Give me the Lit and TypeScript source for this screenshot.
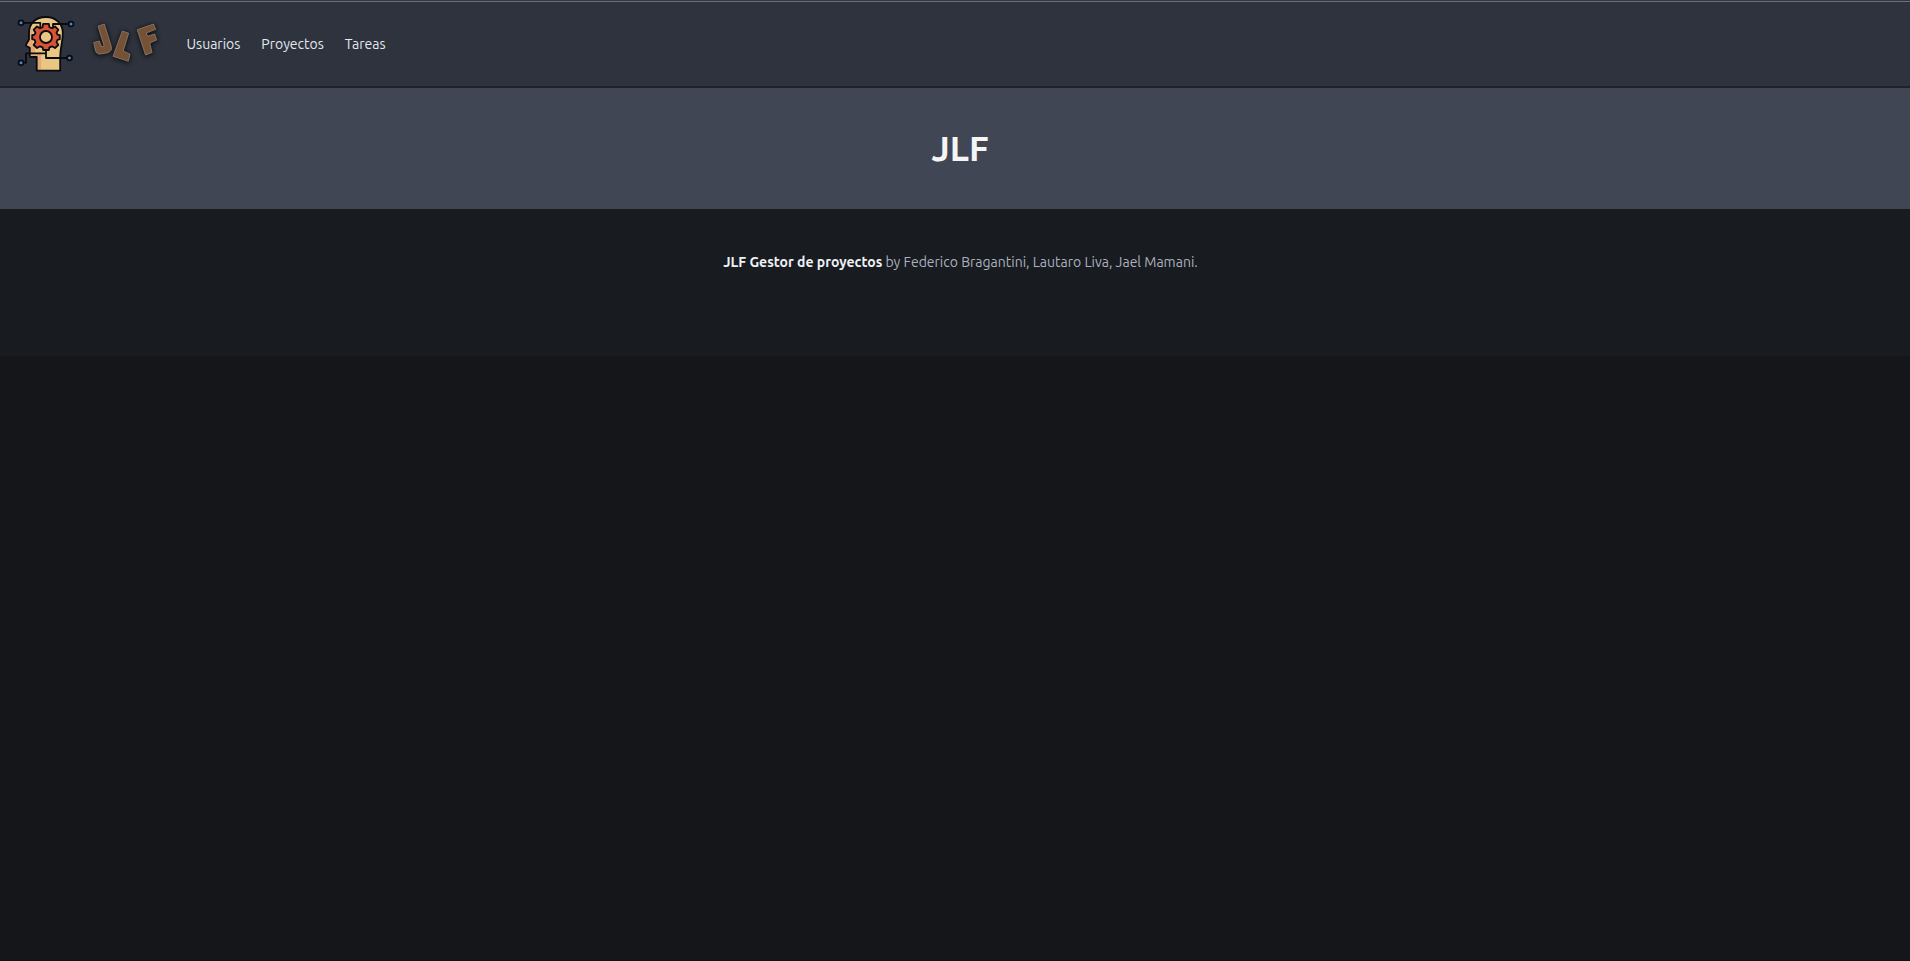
import { LitElement, html, css } from "lit";
import { customElement } from "lit/decorators.js";

@customElement("brain-logo")
class BrainLogo extends LitElement {
  static styles = css`
    :host { display: block; width: 60px; height: 60px; }
    svg { display: block; }
  `;
  render() {
    return html`<svg width="60" height="60" viewBox="16 14 60 60" fill="none" stroke="#080b10" stroke-width="1.8" stroke-linejoin="round" stroke-linecap="round">
      <path stroke="none" fill="#e9c782" d="M36.7 70.7V57H30.8Q29.8 57 29.8 55.5V47.8L26.3 46Q25.6 45.3 26.2 44.4L29 39.5V33C29 23 36 17 46 17C56 17 62.8 24 62.8 33C62.8 43 60.2 47 60.2 57V70.7Z"/>
      <path stroke="none" fill="#e5a878" d="M36.7 70V57H30V47.8L26.5 45.8L29.3 39.7V33L32.5 27V43L35 48V52.5H41V70Z"/>
      <path d="M36.7 70.7V57H30.8Q29.8 57 29.8 55.5V47.8L26.3 46Q25.6 45.3 26.2 44.4L29 39.5V33C29 23 36 17 46 17C56 17 62.8 24 62.8 33C62.8 43 60.2 47 60.2 57V70.7Z"/>
      <path d="M21 22.8H40.3V27M71 24H53V27"/>
      <path d="M21 62.7H26V53.3H46V49M46 53.3V58H69.5"/>
      <path fill="#d95236" d="M43.2 23.8H48.8L49.5 27.2L52 28.3L55 26.4L58.3 29.7L56.5 32.7L57.5 34.6L59.8 35.2V39.2L57.5 39.8L56.5 42L58.3 45L55 48L52 46.3L49.5 47.3L48.8 50H43.2L42.5 47.3L40 46.3L37 48L33.7 45L35.5 42L34.5 39.8L32.2 39.2V35.2L34.5 34.6L35.5 32.7L33.7 29.7L37 26.4L40 28.3L42.5 27.2Z"/>
      <circle cx="46" cy="37" r="6" fill="#e9c782"/>
      <g fill="#5084cf"><circle cx="21" cy="22.8" r="2.4"/><circle cx="71" cy="24" r="2.4"/><circle cx="21" cy="62.7" r="2.4"/><circle cx="69.5" cy="58" r="2.4"/></g>
    </svg>`;
  }
}

@customElement("wood-logo")
class WoodLogo extends LitElement {
  static styles = css`
    :host { display: block; width: 75px; height: 60px; }
    svg { display: block; overflow: visible; filter: drop-shadow(0 1px 2px #15181d) drop-shadow(0 0 1px #15181d); }
  `;
  render() {
    return html`<svg width="75" height="60" viewBox="88 14 75 60" fill="#755236" stroke="#928074" stroke-width="0.8" stroke-linejoin="round">
      <path d="M98 26.2L104.3 24L111.3 46.5Q112.5 51 107.5 52.8L100.5 54Q96.5 54.5 95.3 50L93.7 42.5L99.3 41L101.7 46.8L104.2 46.2Z"/>
      <path d="M122.3 31L128.7 33.2L123.2 51L130 54.2L128.3 61.3L113 56.3Z"/>
      <path d="M137.2 29.7L153.5 24L155.7 29.3L146.3 33L147.7 36.3L154.7 34L156.7 40L149.7 43L152 52.5L145.5 55Z"/>
    </svg>`;
  }
}

@customElement("app-root")
class AppRoot extends LitElement {
  static styles = css`
    :host { display: flex; flex-direction: column; box-sizing: border-box; height: 961px; background: #14161a; border-bottom: 1px solid #180f16; font-family: Ubuntu, "Noto Sans", sans-serif; font-size: 14px; color: #abb1bf; overflow: hidden; }
    nav { box-sizing: border-box; height: 88px; flex: none; display: flex; align-items: center; padding: 1px 0 0 16px; background: #2e333d; border-top: 1px solid #30373e; box-shadow: inset 0 1px #69717a; border-bottom: 2px solid #1f2229; color: #e4e8ee; }
    wood-logo { margin-left: 12px; }
    .links { display: flex; margin-left: 23.5px; gap: 21px; }
    .link { white-space: nowrap; line-height: 20px; }
    .hero { box-sizing: border-box; height: 121px; flex: none; display: grid; place-items: center; padding: 0 0 1px 10px; background: #404654; }
    h1 { margin: 0; font-size: 35px; line-height: 40px; font-weight: 700; color: #f5f5f5; }
    footer { box-sizing: border-box; height: 147px; flex: none; padding: 43px 0 0 11px; background: #181b20; text-align: center; line-height: 20px; }
    strong { color: #eef1f5; font-weight: 700; }
  `;
  render() {
    return html`<nav><brain-logo></brain-logo><wood-logo></wood-logo>
      <div class="links"><span class="link">Usuarios</span><span class="link">Proyectos</span><span class="link">Tareas</span></div></nav>
      <section class="hero"><h1>JLF</h1></section>
      <footer><strong>JLF Gestor de proyectos</strong> by Federico Bragantini, Lautaro Liva, Jael Mamani.</footer>`;
  }
}
